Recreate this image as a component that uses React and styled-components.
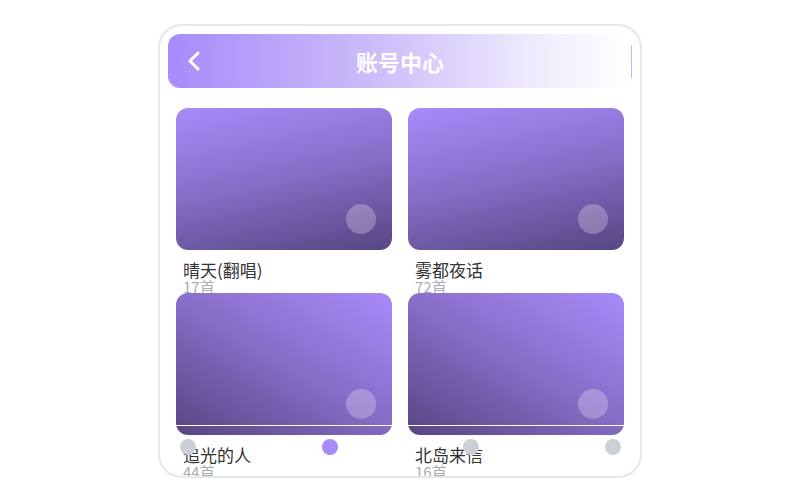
import React from 'react';
import styled, { createGlobalStyle } from 'styled-components';

const GlobalStyle = createGlobalStyle`
    body {
        margin: 0;
        background: #ffffff;
        font-family: "Noto Sans CJK SC", "Noto Sans", sans-serif;
    }
`;

const Page = styled.div`
    display: flex;
    justify-content: center;
    padding-top: 24px;
`;

const Phone = styled.div`
    position: relative;
    box-sizing: border-box;
    width: 484px;
    height: 454px;
    padding: 8px;
    border: 2px solid #e6e6ec;
    border-radius: 24px;
    overflow: hidden;
    background: #ffffff;
`;

const Header = styled.div`
    position: relative;
    display: flex;
    align-items: center;
    justify-content: center;
    height: 54px;
    border-radius: 12px;
    background: linear-gradient(90deg, #a78bfa 0%, #cdbdfa 45%, #f1ecfd 80%, #ffffff 100%);
`;

const BackButton = styled.button`
    position: absolute;
    left: 18px;
    top: 50%;
    transform: translateY(-50%);
    display: flex;
    padding: 0;
    border: none;
    background: none;
`;

const Title = styled.h1`
    margin: 0;
    font-size: 22px;
    font-weight: 700;
    color: #ffffff;
`;

const Divider = styled.span`
    position: absolute;
    right: 0;
    top: 11px;
    width: 1px;
    height: 33px;
    background: #c4b5fd;
`;

const Grid = styled.div`
    display: grid;
    grid-template-columns: 1fr 1fr;
    grid-auto-rows: 169px;
    gap: 16px;
    padding: 20px 8px 0;
`;

const Card = styled.div`
    display: flex;
    flex-direction: column;
    min-width: 0;
`;

const Cover = styled.div`
    position: relative;
    flex: 0 0 142px;
    border-radius: 12px;
    background: ${p => p.flip
        ? 'linear-gradient(30deg, #574683 0%, #8a70cc 55%, #a78bfa 100%)'
        : 'linear-gradient(168deg, #a78bfa 0%, #8a70cc 45%, #574683 100%)'};
`;

const PlayDot = styled.span`
    position: absolute;
    right: 16px;
    bottom: 16px;
    width: 30px;
    height: 30px;
    border-radius: 50%;
    background: rgba(255, 255, 255, 0.25);
`;

const Name = styled.div`
    margin: 10px 0 0 7px;
    font-size: 17px;
    line-height: 20px;
    color: #333333;
`;

const Count = styled.div`
    margin-left: 7px;
    font-size: 15px;
    line-height: 14px;
    color: #a7adb7;
`;

const TabBar = styled.div`
    position: absolute;
    left: 10px;
    right: 9px;
    bottom: 0;
    display: flex;
    justify-content: space-between;
    padding: 13px 10px 21px;
    border-top: 1px solid #ffffff;
`;

const Dot = styled.span`
    width: 16px;
    height: 16px;
    border-radius: 50%;
    background: ${p => (p.active ? '#a78bfa' : '#cbd0d6')};
`;

const albums = [
    { name: '晴天(翻唱)', count: 17 },
    { name: '雾都夜话', count: 72 },
    { name: '追光的人', count: 44, flip: true },
    { name: '北岛来信', count: 16, flip: true },
];

export default function App() {
    return (
        <Page>
            <GlobalStyle />
            <Phone>
                <Header>
                    <BackButton aria-label="返回">
                        <svg width="16" height="22" viewBox="0 0 16 22">
                            <polyline points="12,3 4,11 12,19" fill="none" stroke="#ffffff" strokeWidth="3" strokeLinecap="round" strokeLinejoin="round" />
                        </svg>
                    </BackButton>
                    <Title>账号中心</Title>
                    <Divider />
                </Header>
                <Grid>
                    {albums.map(a => (
                        <Card key={a.name}>
                            <Cover flip={a.flip}>
                                <PlayDot />
                            </Cover>
                            <Name>{a.name}</Name>
                            <Count>{a.count}首</Count>
                        </Card>
                    ))}
                </Grid>
                <TabBar>
                    <Dot />
                    <Dot active />
                    <Dot />
                    <Dot />
                </TabBar>
            </Phone>
        </Page>
    );
}
